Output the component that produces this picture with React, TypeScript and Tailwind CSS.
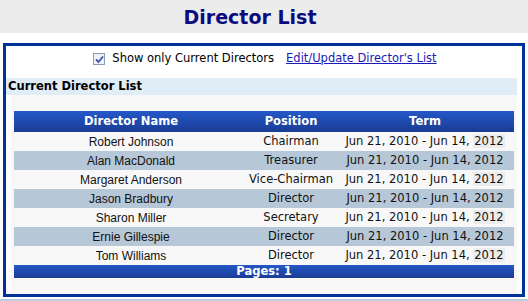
import React from 'react';

const directors = [
  { name: 'Robert Johnson', position: 'Chairman' },
  { name: 'Alan MacDonald', position: 'Treasurer' },
  { name: 'Margaret Anderson', position: 'Vice-Chairman' },
  { name: 'Jason Bradbury', position: 'Director' },
  { name: 'Sharon Miller', position: 'Secretary' },
  { name: 'Ernie Gillespie', position: 'Director' },
  { name: 'Tom Williams', position: 'Director' },
];

export default function App() {
  return (
    <div className="w-[528px] h-[301px] bg-white overflow-hidden font-['DejaVu_Sans',Verdana,sans-serif]">
      <div className="h-[33px] bg-[#ececec] flex items-center justify-center pr-[28px]">
        <h1 className="text-[19px] font-bold text-[#0b0b7d] leading-none pt-[1px]">Director List</h1>
      </div>

      <div className="mt-[10px] ml-[3px] w-[522px] h-[254px] border-[3px] border-[#003399] bg-white">
        <div className="h-[32px] pb-[6px] flex items-center justify-center text-[11.5px] text-black pl-[2px]">
          <span className="w-[12px] h-[12px] border border-[#8d9cb3] bg-[#eef1f6] flex items-center justify-center mr-[7px]">
            <svg width="9" height="9" viewBox="0 0 9 9">
              <path d="M1 4.5 L3.5 7 L8 1.5" fill="none" stroke="#3a4fa8" strokeWidth="1.8" />
            </svg>
          </span>
          <span>Show only Current Directors</span>
          <a className="ml-[12px] text-[#1a1ab8] underline">Edit/Update Director's List</a>
        </div>

        <div className="w-[511px] h-[17px] bg-[#e1edf6] flex items-center pl-[2px] text-[11.5px] font-bold text-black">
          Current Director List
        </div>

        <div className="ml-[5px] w-[506px] h-[199px] bg-[#f8f8f8] pt-[16px] pl-[3px]">
          <table className="w-[500px] border-collapse">
            <thead>
              <tr className="h-[21px] bg-gradient-to-b from-[#2458c8] to-[#1a3c94] text-white text-[11.5px] font-bold">
                <th className="w-[234px] text-center font-bold">Director Name</th>
                <th className="w-[86px] text-center font-bold">Position</th>
                <th className="text-center font-bold pl-[2px]">Term</th>
              </tr>
            </thead>
            <tbody>
              {directors.map((d, i) => {
                const alt = i % 2 === 1;
                return (
                  <tr key={d.name} className={`h-[19px] ${alt ? 'bg-[#b6c7d7]' : 'bg-[#f8f8f8]'}`}>
                    <td className="text-center text-[12px] font-['Liberation_Sans',Arial,sans-serif] text-[#111] p-0">{d.name}</td>
                    <td className="text-center text-[11.5px] text-[#111] p-0">{d.position}</td>
                    <td className="text-center text-[11.5px] text-[#111] p-0 pl-[2px] whitespace-nowrap">
                      Jun 21, 2010 - Jun 14,{' '}
                      <span className={alt ? '' : 'bg-[#ececec] px-[1px]'}>2012</span>
                    </td>
                  </tr>
                );
              })}
              <tr className="h-[13px] bg-gradient-to-b from-[#2458c8] to-[#1a3c94]">
                <td colSpan={3} className="text-center text-white text-[11.5px] font-bold leading-[13px] p-0">
                  Pages: 1
                </td>
              </tr>
            </tbody>
          </table>
        </div>
      </div>
      <div className="mt-[2px] h-[2px] bg-[#b9cfe0]" />
    </div>
  );
}
